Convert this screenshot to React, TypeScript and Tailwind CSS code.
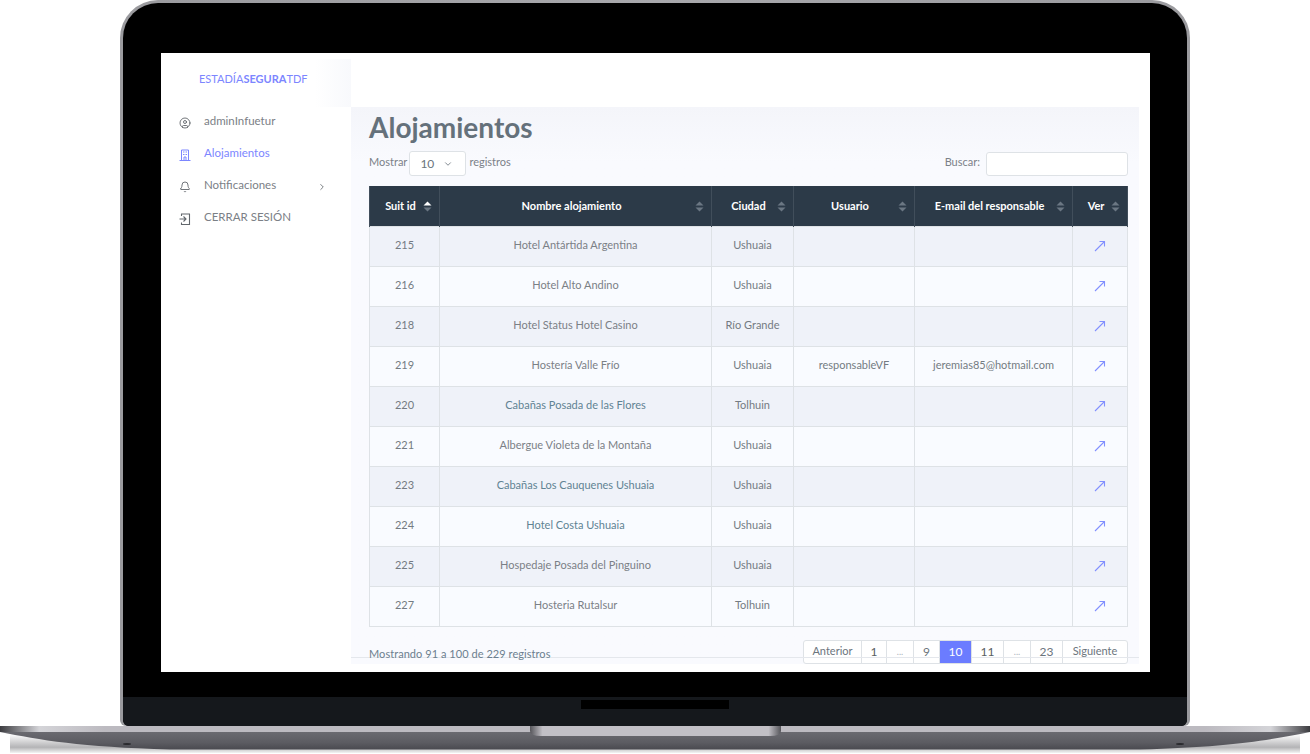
import { ChevronDown, ChevronRight, CircleUser, Bell } from 'lucide-react'

const rows = [
  { id: 215, name: 'Hotel Antártida Argentina', city: 'Ushuaia', user: '', email: '' },
  { id: 216, name: 'Hotel Alto Andino', city: 'Ushuaia', user: '', email: '' },
  { id: 218, name: 'Hotel Status Hotel Casino', city: 'Río Grande', user: '', email: '' },
  { id: 219, name: 'Hostería Valle Frío', city: 'Ushuaia', user: 'responsableVF', email: 'jeremias85@hotmail.com' },
  { id: 220, name: 'Cabañas Posada de las Flores', city: 'Tolhuin', user: '', email: '' },
  { id: 221, name: 'Albergue Violeta de la Montaña', city: 'Ushuaia', user: '', email: '' },
  { id: 223, name: 'Cabañas Los Cauquenes Ushuaia', city: 'Ushuaia', user: '', email: '' },
  { id: 224, name: 'Hotel Costa Ushuaia', city: 'Ushuaia', user: '', email: '' },
  { id: 225, name: 'Hospedaje Posada del Pinguino', city: 'Ushuaia', user: '', email: '' },
  { id: 227, name: 'Hosteria Rutalsur', city: 'Tolhuin', user: '', email: '' },
]

const columns = [
  { label: 'Suit id', width: 'w-[70px]', active: true },
  { label: 'Nombre alojamiento', width: 'w-[272px]', active: false },
  { label: 'Ciudad', width: 'w-[82px]', active: false },
  { label: 'Usuario', width: 'w-[121px]', active: false },
  { label: 'E-mail del responsable', width: 'w-[158px]', active: false },
  { label: 'Ver', width: 'w-[55px]', active: false },
]

const pages = [
  { label: 'Anterior', width: 'w-[58px]', tone: 'text-[#6c757d]' },
  { label: '1', width: 'w-[25px]', tone: 'text-[#5a5f64] text-[12px]' },
  { label: '...', width: 'w-[27px]', tone: 'text-[#aab2ba] text-[9px]' },
  { label: '9', width: 'w-[26px]', tone: 'text-[#6c757d] text-[12px]' },
  { label: '10', width: 'w-[32px]', tone: 'bg-[#6b7cff] text-white text-[12px] relative z-10' },
  { label: '11', width: 'w-[32px]', tone: 'text-[#5a5f64] text-[12px]' },
  { label: '...', width: 'w-[27px]', tone: 'text-[#aab2ba] text-[9px]' },
  { label: '23', width: 'w-[32px]', tone: 'text-[#6c757d] text-[12px]' },
  { label: 'Siguiente', width: 'w-[64px]', tone: 'text-[#6c757d]' },
]

const SortIcon = ({ active }: { active: boolean }) => (
  <svg className="absolute right-[7px] top-[15px] w-[9px] h-[11px]" viewBox="0 0 9 11">
    <path d="M4.5 0.5 L8.5 4.5 H0.5 Z" fill={active ? '#ffffff' : '#6b7783'} />
    <path d="M0.5 6.5 H8.5 L4.5 10.5 Z" fill="#6b7783" />
  </svg>
)

const Arrow = () => (
  <svg className="w-[12px] h-[12px] mx-auto" viewBox="0 0 12 12" fill="none" stroke="#8290ff" strokeWidth="1.1">
    <path d="M1 11 L10.5 1.5 M5.5 1.5 H10.5 V6.5" />
  </svg>
)

const BuildingIcon = () => (
  <svg className="w-[12px] h-[12px]" viewBox="0 0 12 12" fill="none" stroke="currentColor" strokeWidth="1">
    <path d="M2.5 11 V1 H9.5 V11 M0.5 11.5 H11.5 M4 3 H5.5 M6.5 3 H8 M4 5.5 H5.5 M6.5 5.5 H8 M5 11 V8 H7 V11" />
  </svg>
)

const ExitIcon = () => (
  <svg className="w-[12px] h-[12px]" viewBox="0 0 12 12" fill="none" stroke="currentColor" strokeWidth="1.1">
    <path d="M2.5 3 V1 H10.5 V11.5 H2.5 V9.5 M0.5 6 H7 M4.5 3.5 L7 6 L4.5 8.5" />
  </svg>
)

const NavItem = ({ label, icon, active, chevron }: { label: string; icon: React.ReactNode; active?: boolean; chevron?: boolean }) => (
  <div className={`h-[32px] flex items-center pl-[18px] pr-[24px] text-[11.5px] ${active ? 'text-[#7c86ff]' : 'text-[#7b8086]'}`}>
    <span className={`w-[25px] pt-[3px] ${active ? '' : 'text-[#62676c]'}`}>{icon}</span>
    <span className="flex-1 pb-[1px]">{label}</span>
    {chevron && <ChevronRight size={10} className="mt-[3px] text-[#62676c]" />}
  </div>
)

const App = () => {
  return (
    <div className="w-[1310px] h-[754px] bg-white overflow-hidden flex flex-col font-['Lato','Liberation_Sans',sans-serif]">
      {/* lid */}
      <div className="mx-[120px] h-[726px] rounded-t-[38px] rounded-b-[6px] bg-gradient-to-r from-[#9a9a9e] via-[#a8a8ac] to-[#9a9a9e] p-[3px] pb-0">
        <div className="h-full rounded-t-[35px] rounded-b-[6px] bg-black flex flex-col overflow-hidden">
          <div className="h-[694px] pt-[50px] px-[38px] pb-[25px] shrink-0">
            {/* screen */}
            <div className="h-[619px] w-[989px] bg-white flex">
              {/* sidebar */}
              <div className="w-[190px] shrink-0 relative">
                <div className="absolute right-0 top-[6px] w-[36px] h-[48px] bg-gradient-to-r from-white to-[#f8f9fc]" />
                <div className="h-[52px] pt-[18px] pl-[38px] text-[11px] leading-[16px] text-[#7c86ff] whitespace-nowrap">
                  ESTADÍA<span className="font-bold">SEGURA</span>TDF
                </div>
                <div>
                  <NavItem label="adminInfuetur" icon={<CircleUser size={12} strokeWidth={1.8} />} />
                  <NavItem label="Alojamientos" icon={<BuildingIcon />} active />
                  <NavItem label="Notificaciones" icon={<Bell size={12} strokeWidth={1.8} />} chevron />
                  <NavItem label="CERRAR SESIÓN" icon={<ExitIcon />} />
                </div>
              </div>
              {/* main */}
              <div className="w-[788px] shrink-0 flex flex-col">
                <div className="h-[54px] shrink-0 bg-white" />
                <div className="h-[557px] bg-gradient-to-b from-[#f4f5fa] to-[#f9fafe] to-[10%] pl-[18px] pr-[11px] relative overflow-hidden">
                  <h1 className="text-[28px] leading-[40px] font-bold text-[#65717b]">Alojamientos</h1>
                  <div className="flex items-center justify-between h-[25px] mt-[4px] text-[11px] text-[#7b8188]">
                    <div className="flex items-center">
                      <span className="pb-[2px]">Mostrar</span>
                      <div className="ml-[2px] mr-[3px] w-[57px] h-[25px] bg-white border border-[#dee2e6] rounded-[3px] flex items-center justify-between pl-[10px] pr-[12px] text-[#6c757d] text-[12px]">
                        10 <ChevronDown size={10} />
                      </div>
                      <span className="pb-[2px]">registros</span>
                    </div>
                    <div className="flex items-center">
                      <span className="mr-[6px] pb-[2px]">Buscar:</span>
                      <div className="w-[142px] h-[24px] bg-white border border-[#dee2e6] rounded-[3px]" />
                    </div>
                  </div>
                  <table className="mt-[10px] table-fixed w-[758px] border-collapse text-[11px] text-center">
                    <thead>
                      <tr className="h-[40px] bg-[#2c3a48]">
                        {columns.map((c) => (
                          <th key={c.label} className={`${c.width} relative border-x border-[#414e5b] font-bold text-white pr-[8px]`}>
                            {c.label}
                            <SortIcon active={c.active} />
                          </th>
                        ))}
                      </tr>
                    </thead>
                    <tbody>
                      {rows.map((r, i) => (
                        <tr key={r.id} className={`h-[40px] ${i % 2 === 0 ? 'bg-[#eff2f9]' : 'bg-[#f9fbff]'}`}>
                          <td className="border border-[#dee2e6] text-[#747b82] pb-[1px]">{r.id}</td>
                          <td className={`border border-[#dee2e6] pb-[1px] ${[4, 6, 7].includes(i) ? 'text-[#5f8393]' : 'text-[#7b8086]'}`}>{r.name}</td>
                          <td className="border border-[#dee2e6] text-[#747b82] pb-[1px]">{r.city}</td>
                          <td className="border border-[#dee2e6] text-[#747b82] pb-[1px]">{r.user}</td>
                          <td className="border border-[#dee2e6] text-[#747b82] pb-[1px]">{r.email}</td>
                          <td className="border border-[#dee2e6]"><Arrow /></td>
                        </tr>
                      ))}
                    </tbody>
                  </table>
                  <div className="flex justify-between mt-[13px] h-[24px]">
                    <span className="relative z-10 pt-[6px] text-[11px] tracking-[0.05px] leading-[16px] text-[#6c7f8f]">Mostrando 91 a 100 de 229 registros</span>
                    <div className="flex border border-[#dee2e6] rounded-[3px] text-[11px] bg-white">
                      {pages.map((p, i) => (
                        <div
                          key={i}
                          className={`${p.width} ${p.tone} flex items-center justify-center border-r last:border-r-0 border-[#dee2e6]`}
                        >
                          {p.label}
                        </div>
                      ))}
                    </div>
                  </div>
                  <div className="absolute left-0 right-0 bottom-[6px] h-px bg-[#e4e7ec]" />
                </div>
                <div className="h-[8px]" />
              </div>
            </div>
          </div>
          {/* chin */}
          <div className="flex-1 bg-[#15181c] flex justify-center">
            <div className="mt-[3px] w-[148px] h-[9px] bg-black" />
          </div>
        </div>
      </div>
      {/* base */}
      <svg className="w-[1310px] h-[28px] shrink-0" viewBox="0 0 1310 28">
        <defs>
          <linearGradient id="top" x1="0" x2="1" y1="0" y2="0">
            <stop offset="0" stopColor="#3c3c40" />
            <stop offset="0.03" stopColor="#d4d4d8" />
            <stop offset="0.08" stopColor="#bcbac0" />
            <stop offset="0.92" stopColor="#bcbac0" />
            <stop offset="0.97" stopColor="#d4d4d8" />
            <stop offset="1" stopColor="#3c3c40" />
          </linearGradient>
          <linearGradient id="body" x1="0" x2="0" y1="0" y2="1">
            <stop offset="0" stopColor="#6a6a70" />
            <stop offset="0.6" stopColor="#5c5c62" />
            <stop offset="1" stopColor="#4a4a50" />
          </linearGradient>
          <linearGradient id="shadow" x1="0" x2="0" y1="0" y2="1">
            <stop offset="0" stopColor="#ffffff" />
            <stop offset="0.7" stopColor="#b4b4b6" />
            <stop offset="1" stopColor="#f4f4f4" />
          </linearGradient>
          <linearGradient id="notch" x1="0" x2="1" y1="0" y2="0">
            <stop offset="0" stopColor="#55555a" />
            <stop offset="0.05" stopColor="#c2c0c6" />
            <stop offset="0.95" stopColor="#c2c0c6" />
            <stop offset="1" stopColor="#55555a" />
          </linearGradient>
        </defs>
        <rect x="10" y="8" width="1290" height="19" fill="url(#shadow)" />
        <path d="M0 6 C40 14 80 21 170 23.5 H1140 C1230 21 1270 14 1310 6 Z" fill="url(#body)" />
        <rect x="0" y="0" width="1310" height="6" fill="url(#top)" />
        <path d="M530 0 H781 V5 Q781 10 770 10 H541 Q530 10 530 5 Z" fill="url(#notch)" />
        <ellipse cx="127" cy="18" rx="4" ry="1" fill="#2a2a2e" />
        <ellipse cx="1180" cy="18" rx="4" ry="1" fill="#2a2a2e" />
      </svg>
    </div>
  )
}

export default App
